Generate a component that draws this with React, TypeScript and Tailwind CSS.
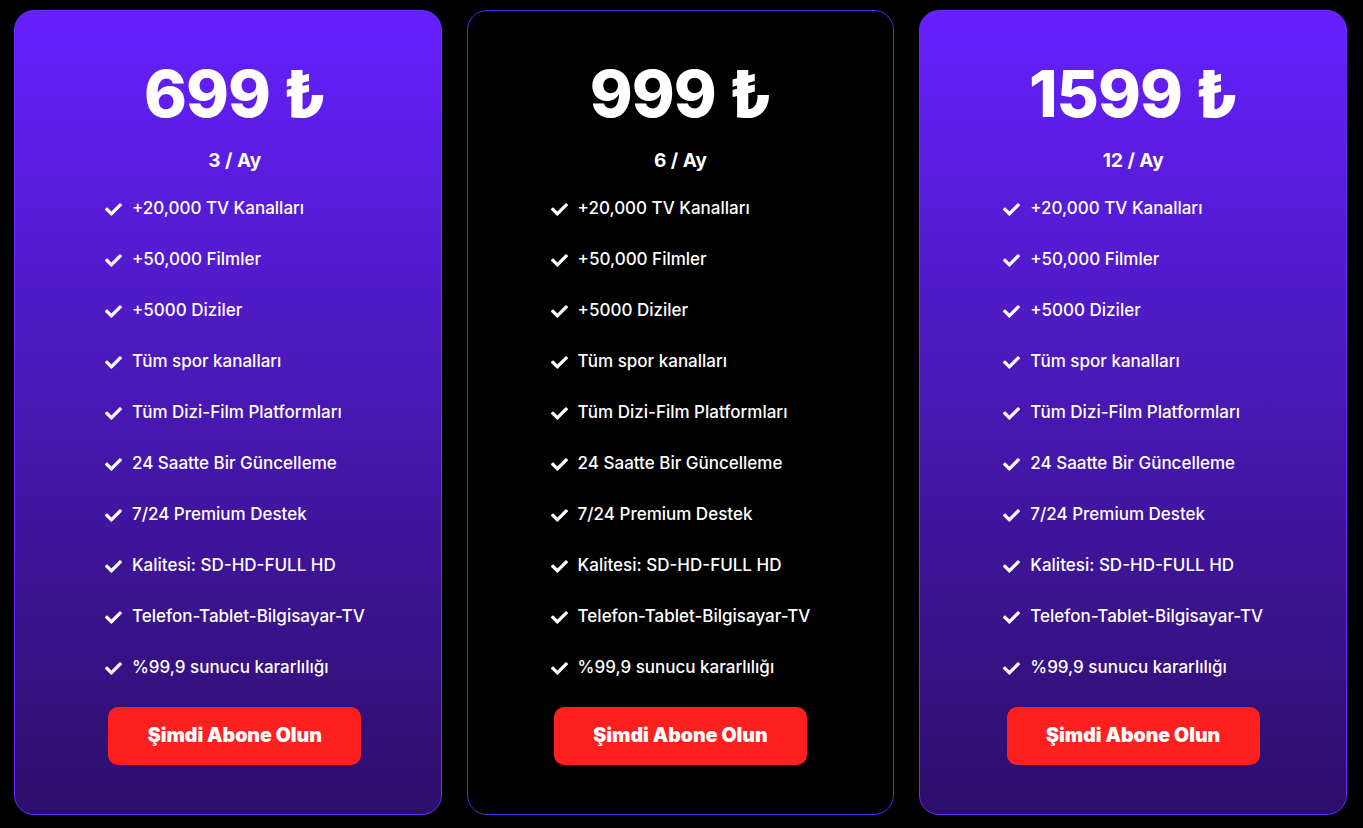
import { FaCheck } from "react-icons/fa";

const features = [
  "+20,000 TV Kanalları",
  "+50,000 Filmler",
  "+5000 Diziler",
  "Tüm spor kanalları",
  "Tüm Dizi-Film Platformları",
  "24 Saatte Bir Güncelleme",
  "7/24 Premium Destek",
  "Kalitesi: SD-HD-FULL HD",
  "Telefon-Tablet-Bilgisayar-TV",
  "%99,9 sunucu kararlılığı",
];

const plans = [
  { price: "699 ₺", period: "3 / Ay", dark: false, shift: true },
  { price: "999 ₺", period: "6 / Ay", dark: true, shift: false },
  { price: "1599 ₺", period: "12 / Ay", dark: false, shift: false },
];

function PlanCard({ price, period, dark, shift }: { price: string; period: string; dark: boolean; shift: boolean }) {
  return (
    <div
      className={
        dark
          ? "h-[805px] rounded-[20px] border border-[#5a22f0] bg-black"
          : "h-[805px] rounded-[20px] border border-[#6a2cff] bg-gradient-to-b from-[#6620ff] to-[#2c0e6a]"
      }
    >
      <div className={shift ? "flex flex-col items-center pl-[14px] pt-[46px]" : "flex flex-col items-center pt-[46px]"}>
        <h2 className="text-[65px] font-extrabold leading-none tracking-[-1px] text-white h-[72px] flex items-center">
          {price}
        </h2>
        <p className="mt-[22px] text-[19px] font-bold leading-none text-white">{period}</p>
        <ul className="mt-[27px] flex flex-col gap-[27px]">
          {features.map((f) => (
            <li key={f} className="flex items-center h-[24px] text-[17px] font-medium text-white">
              <FaCheck className="w-[17px] h-[17px] mr-[10px]" />
              <span>{f}</span>
            </li>
          ))}
        </ul>
        <button className="mt-[27px] w-[253px] h-[58px] rounded-[10px] bg-[#ff1f1f] text-[19.5px] font-black text-white">
          Şimdi Abone Olun
        </button>
      </div>
    </div>
  );
}

export default function App() {
  return (
    <div className="min-h-[828px] bg-black pl-[14px] pr-[16px] pt-[10px] font-['Inter','Noto_Sans',sans-serif]">
      <div className="grid grid-cols-3 gap-[25px]">
        {plans.map((p) => (
          <PlanCard key={p.price} {...p} />
        ))}
      </div>
    </div>
  );
}
